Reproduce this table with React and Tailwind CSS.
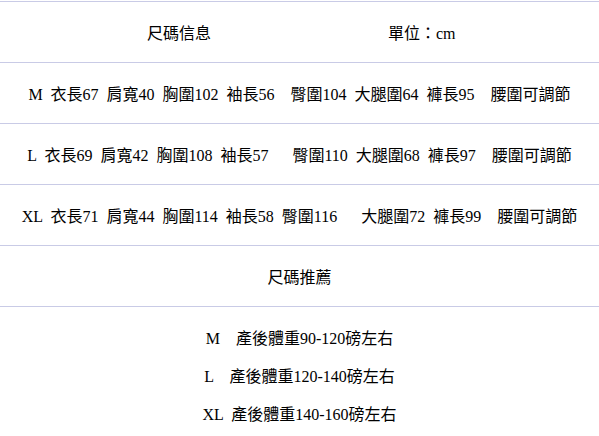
import React from 'react';

const sizes = [
  'M 衣長67 肩寬40 胸圍102 袖長56  臀圍104 大腿圍64 褲長95  腰圍可調節',
  'L 衣長69 肩寬42 胸圍108 袖長57   臀圍110 大腿圍68 褲長97  腰圍可調節',
  'XL 衣長71 肩寬44 胸圍114 袖長58 臀圍116   大腿圍72 褲長99  腰圍可調節',
];

const advice = [
  'M  產後體重90-120磅左右',
  'L  產後體重120-140磅左右',
  'XL 產後體重140-160磅左右',
];

function Row({ children, className = '' }) {
  return (
    <div className={`h-[61px] pt-[3px] border-b border-[#c9cbe6] flex items-center ${className}`}>
      {children}
    </div>
  );
}

export default function App() {
  return (
    <div
      className="w-[599px] h-[436px] bg-white text-black text-[16px] leading-[16px] overflow-hidden pt-px [word-spacing:4px]"
      style={{ fontFamily: '"Liberation Serif", "Noto Sans CJK TC", serif' }}
    >
      <div className="border-t border-[#c9cbe6]">
        <Row className="whitespace-pre">
          <span className="ml-[147px]">尺碼信息</span>
          <span className="ml-[177px]">單位：cm</span>
        </Row>

        {sizes.map((s) => (
          <Row key={s} className="justify-center whitespace-pre">
            <span>{s}</span>
          </Row>
        ))}

        <Row className="justify-center">
          <span>尺碼推薦</span>
        </Row>
      </div>

      <div className="pt-[13px] flex flex-col">
        {advice.map((a) => (
          <div key={a} className="h-[38px] flex items-center justify-center whitespace-pre">
            <span>{a}</span>
          </div>
        ))}
      </div>
    </div>
  );
}
